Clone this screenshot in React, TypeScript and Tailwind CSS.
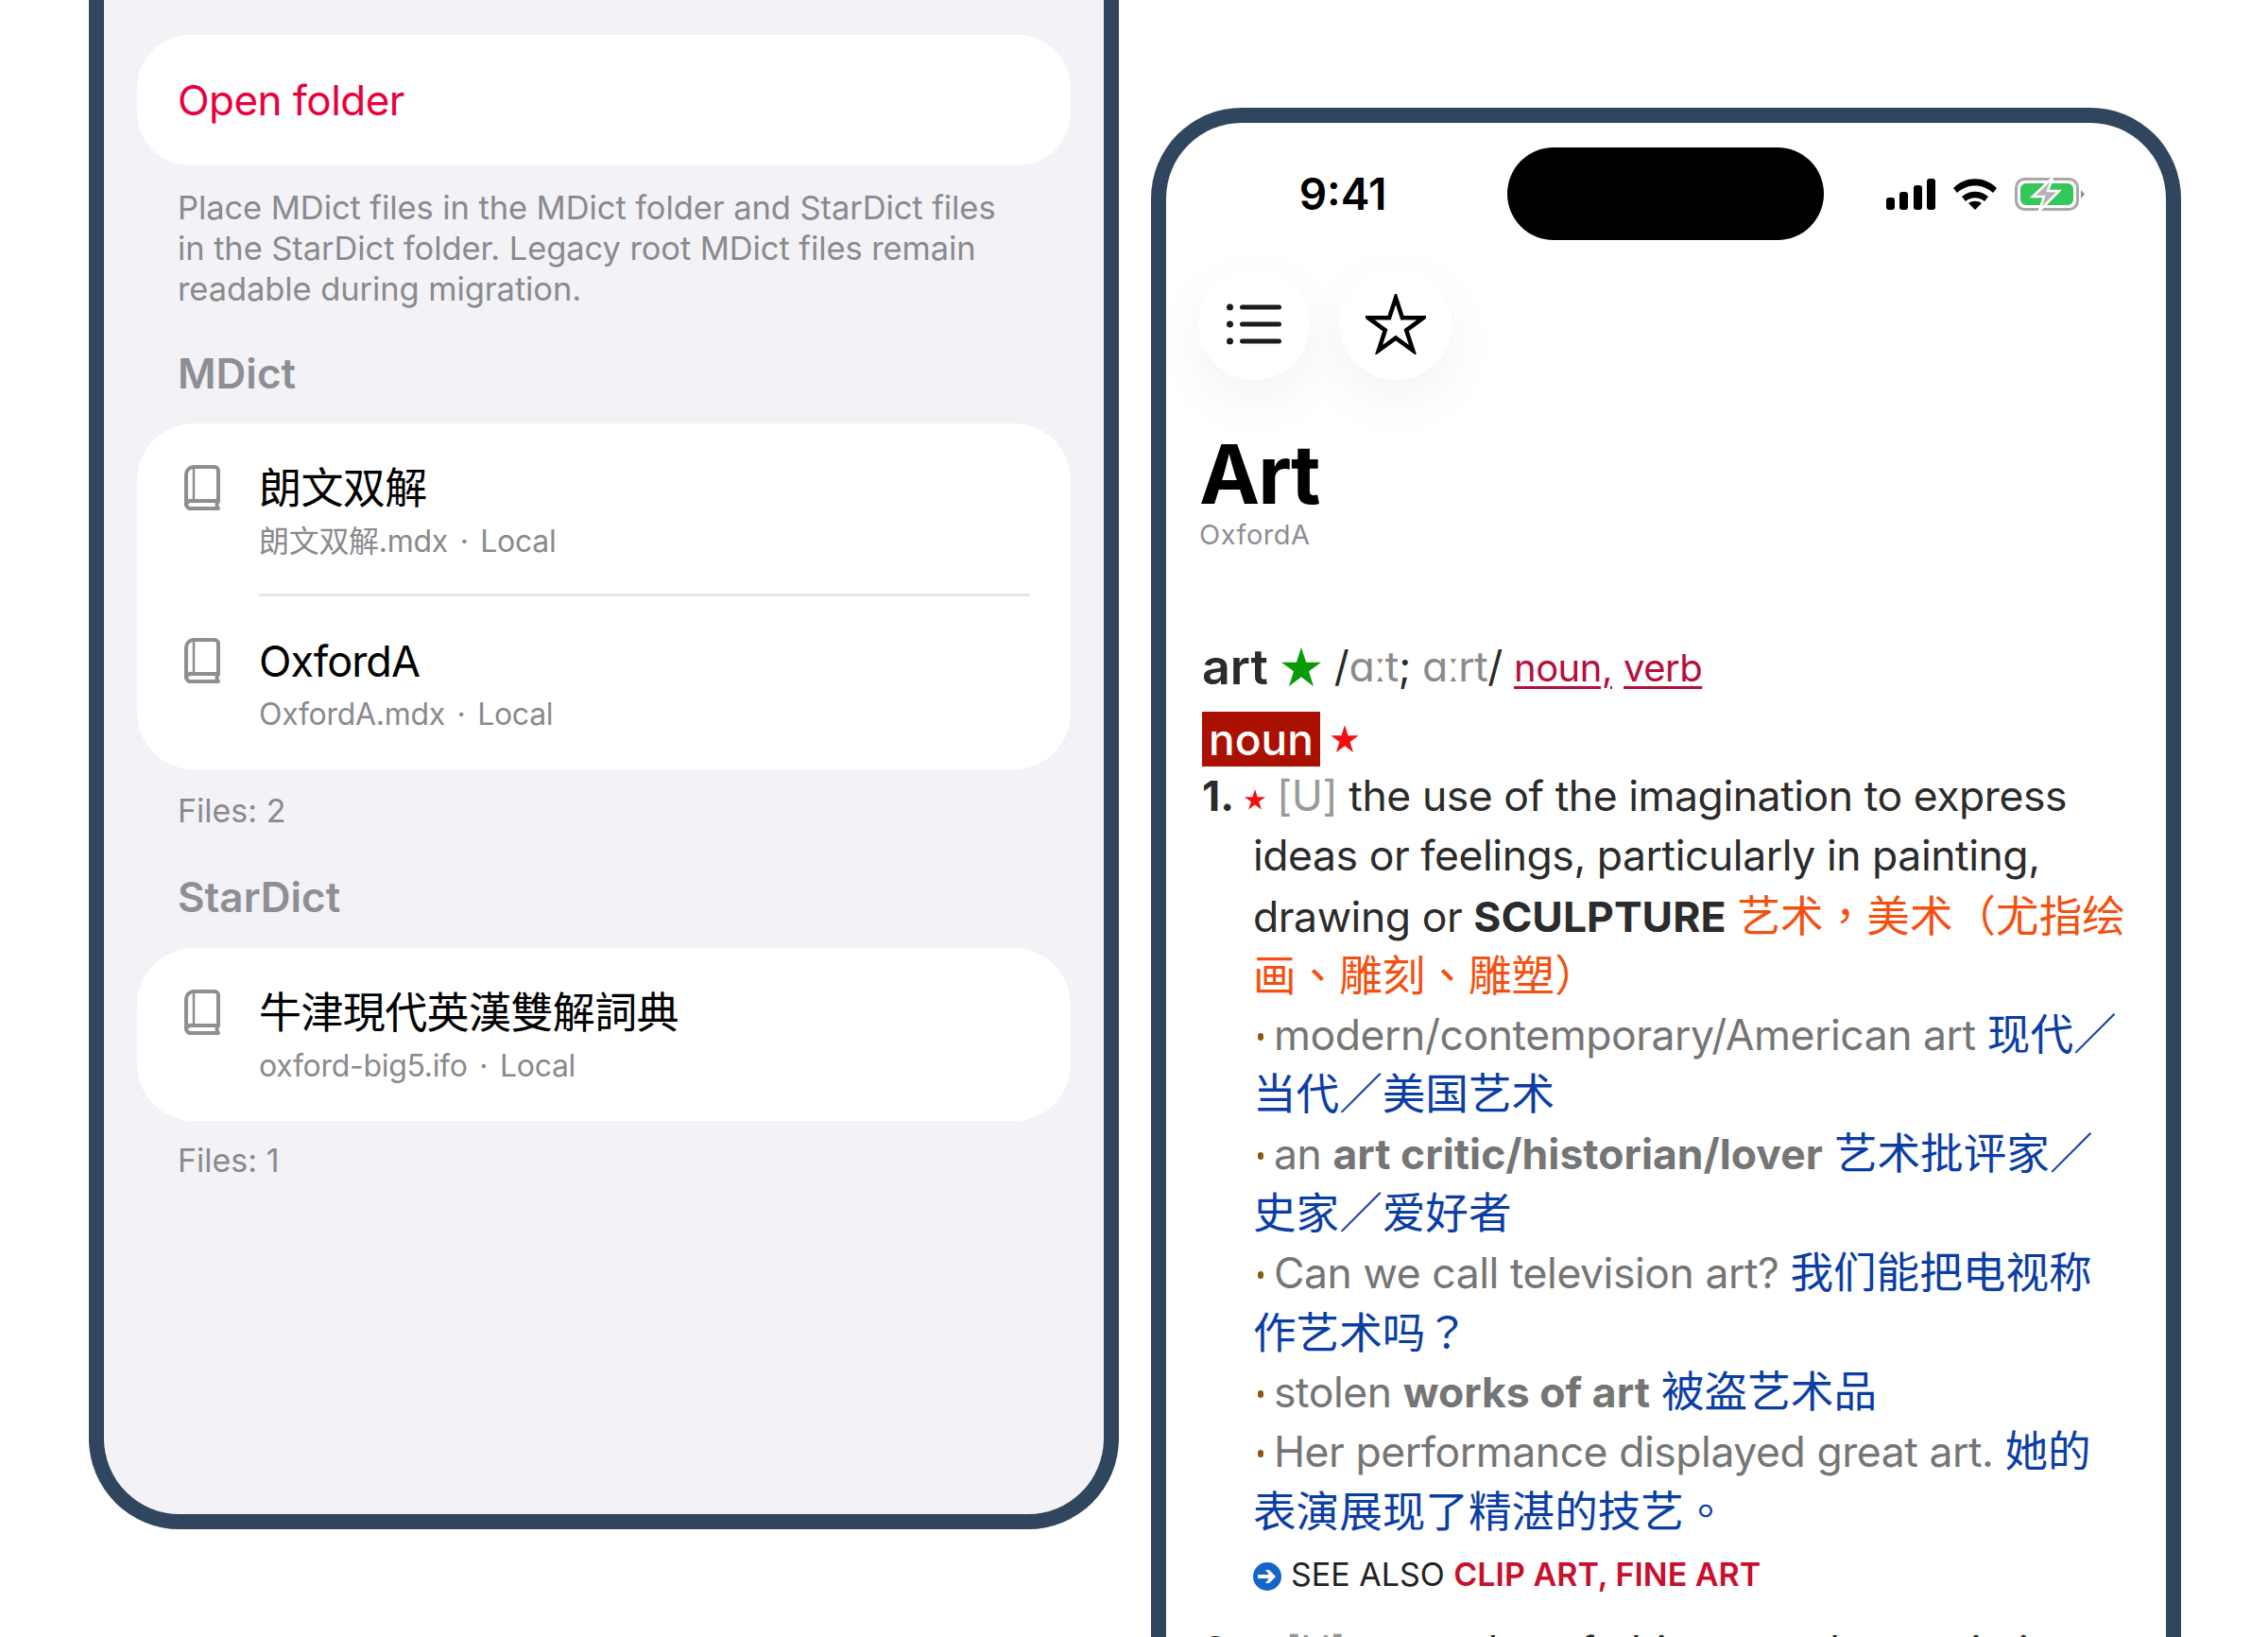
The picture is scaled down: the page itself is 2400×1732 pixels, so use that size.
const cjk = `font-['Inter','Noto_Sans_CJK_SC',sans-serif]`;

const Star = ({ className }: { className: string }) => (
  <svg viewBox="0 0 24 24" className={className} fill="currentColor">
    <path d="M12 1l2.7 8.2H23l-6.8 5 2.6 8.3L12 17.4l-6.8 5.1 2.6-8.3L1 9.2h8.3z" />
  </svg>
);

const BookIcon = () => (
  <svg viewBox="0 0 38 48" className="w-[38px] h-[48px] shrink-0" fill="none" stroke="#8e8e93" strokeWidth="4" strokeLinejoin="round" strokeLinecap="round">
    <path d="M10 2h22a4 4 0 0 1 4 4v32H8a5 5 0 0 0-6 4V10a8 8 0 0 1 8-8z" />
    <path d="M10 2v36" strokeWidth="2.5" />
    <path d="M2 42a5 5 0 0 0 6 4h28c-2-2-2-6 0-8" />
  </svg>
);

const DictRow = ({ title, file, divider, titleClass = "" }: { title: string; file: string; divider?: boolean; titleClass?: string }) => (
  <div className="flex pl-[50px] pr-[43px] h-[183px]">
    <div className="w-[79px] pt-[44px]">
      <BookIcon />
    </div>
    <div className="flex-1 pt-[40px] relative">
      <div className={`text-[45px] leading-[58px] text-black tracking-[-0.6px] ${titleClass}`}>{title}</div>
      <div className="text-[32px] leading-[40px] mt-[7px] text-[#8a8a8e] tracking-[-0.3px]">
        {file} <span className="mx-[4px]">·</span> Local
      </div>
      {divider && <div className="absolute left-0 right-0 bottom-0 h-[3px] bg-[#e5e5ea]" />}
    </div>
  </div>
);

const LeftPhone = () => (
  <div className="w-[1090px] h-[1618px] shrink-0 border-x-[16px] border-b-[16px] border-[#30455e] rounded-b-[96px] bg-[#f2f2f7] px-[35px] pt-[37px]">
    <div className="h-[138px] bg-white rounded-[56px] flex items-center pl-[43px] text-[44px] tracking-[-0.55px] text-[#e8003c]">Open folder</div>
    <div className="mt-[23px] pl-[43px] text-[34.5px] leading-[43px] tracking-[-0.09px] text-[#8a8a8e]">
      <div>Place MDict files in the MDict folder and StarDict files</div>
      <div>in the StarDict folder. Legacy root MDict files remain</div>
      <div>readable during migration.</div>
    </div>
    <div className="mt-[40px] pl-[43px] text-[44px] leading-[56px] font-semibold text-[#8e8e93]">MDict</div>
    <div className="mt-[25px] bg-white rounded-[60px] h-[366px]">
      <DictRow title="朗文双解" file="朗文双解.mdx" divider />
      <DictRow title="OxfordA" file="OxfordA.mdx" titleClass="tracking-[-1px]" />
    </div>
    <div className="mt-[23px] pl-[43px] text-[34px] leading-[42px] text-[#8a8a8e]">Files: 2</div>
    <div className="mt-[42px] pl-[43px] text-[44px] leading-[56px] font-semibold text-[#8e8e93]">StarDict</div>
    <div className="mt-[26px] bg-white rounded-[60px] h-[183px]">
      <DictRow title="牛津現代英漢雙解詞典" file="oxford-big5.ifo" />
    </div>
    <div className="mt-[21px] pl-[43px] text-[34px] leading-[42px] text-[#8a8a8e]">Files: 1</div>
  </div>
);

const StatusIcons = () => (
  <div className="flex items-center ml-[66px] gap-[19px]">
    <svg viewBox="0 0 52 33" className="w-[52px] h-[33px]" fill="#000">
      <rect x="0" y="20" width="9" height="13" rx="3" />
      <rect x="14" y="14" width="9" height="19" rx="3" />
      <rect x="29" y="7" width="9" height="26" rx="3" />
      <rect x="43" y="0" width="9" height="33" rx="3" />
    </svg>
    <svg viewBox="0 0 46 33" className="w-[46px] h-[33px]" fill="#000">
      <path d="M0 10C13-3 33-3 46 10l-4 5C31 5 15 5 4 15z" />
      <path d="M9 19c8-7 20-7 28 0l-4 5c-6-5-14-5-20 0z" />
      <path d="M16 26c4-3 10-3 14 0l-7 7z" />
    </svg>
    <svg viewBox="0 0 74 35" className="w-[74px] h-[35px]">
      <rect x="1.5" y="1.5" width="65" height="32" rx="9" fill="none" stroke="#a8a8a8" strokeWidth="3" />
      <rect x="6" y="6" width="56" height="23" rx="6" fill="#34c759" />
      <path d="M70 13l4 4.500-4 4.500z" fill="#8e8e8e" />
      <path d="M40 0L19 20h12l-5 15 21-21H35z" fill="#b4b4b4" stroke="#fff" strokeWidth="2.500" />
    </svg>
  </div>
);

const Line = ({ children, className = "" }: { children: React.ReactNode; className?: string }) => (
  <div className={`h-[63px] flex items-center ${className}`}>
    <span>{children}</span>
  </div>
);

const Example = ({ children }: { children: React.ReactNode }) => (
  <div className="h-[63px] flex items-center text-[#757575]">
    <span className="w-[6px] h-[8px] ml-[5px] mr-[11px] mt-[4px] shrink-0 rounded-full bg-[#8a5a10]" />
    <span>{children}</span>
  </div>
);

const Blue = ({ children }: { children: React.ReactNode }) => (
  <span className="text-[#0b3ea5] text-[45.6px] tracking-normal">{children}</span>
);
const Orange = ({ children }: { children: React.ReactNode }) => (
  <span className="text-[#f4500f] text-[45.6px] tracking-normal">{children}</span>
);
// centred punctuation, as the traditional Chinese cut of the font draws it
const Punct = ({ children }: { children: React.ReactNode }) => (
  <span className="font-['Noto_Sans_CJK_TC',sans-serif]">{children}</span>
);

const roundButton = "w-[118px] h-[118px] rounded-full bg-white shadow-[0_20px_60px_rgba(0,0,0,0.05)] flex items-center justify-center";

const RightPhone = () => (
  <div className="w-[1090px] h-[1700px] shrink-0 mt-[114px] border-x-[16px] border-t-[16px] border-[#30455e] rounded-t-[96px] bg-white overflow-hidden">
    <div className="flex items-center mt-[26px] h-[98px]">
      <div className="w-[361px] pl-[13px] text-center text-[46px] font-semibold text-black">9:41</div>
      <div className="w-[335px] h-[98px] rounded-[49px] bg-black" />
      <StatusIcons />
    </div>
    <div className="flex gap-[32px] mt-[30px] ml-[34px]">
      <div className={roundButton}>
        <svg viewBox="0 0 58 44" className="w-[58px] h-[44px]" fill="#1c1c1e">
          <circle cx="3.500" cy="4" r="3.500" />
          <circle cx="3.500" cy="22" r="3.500" />
          <circle cx="3.500" cy="40" r="3.500" />
          <rect x="14" y="1.500" width="44" height="5" rx="2.500" />
          <rect x="14" y="19.500" width="44" height="5" rx="2.500" />
          <rect x="14" y="37.500" width="44" height="5" rx="2.500" />
        </svg>
      </div>
      <div className={roundButton}>
        <svg viewBox="0 0 24 24" className="w-[64px] h-[64px]" fill="none" stroke="#000" strokeWidth="1.700" strokeLinejoin="miter">
          <path d="M12 1.500l2.600 8h8.300l-6.700 4.900 2.600 8L12 17.500l-6.800 4.900 2.600-8L1.100 9.500h8.300z" />
        </svg>
      </div>
    </div>
    <div className="ml-[35px] mt-[50px] text-[86px] leading-[100px] font-bold tracking-[-2px] text-black">Art</div>
    <div className="ml-[35px] mt-[-6px] text-[29px] leading-[40px] text-[#8e8e93] tracking-[0.5px]">OxfordA</div>
    <div className="ml-[38px] mt-[88px] text-[44.5px] leading-[63px] tracking-[-0.45px] text-[#2b2b2b] whitespace-nowrap">
      <div className="flex items-center gap-[12px] h-[63px]">
        <span className="font-semibold text-[52px] tracking-normal">art</span>
        <Star className="w-[46px] h-[46px] text-[#0a9a0a]" />
        <span>
          /<span className="text-[#8a8a8a]">ɑːt</span>; <span className="text-[#8a8a8a]">ɑːrt</span>/{" "}
          <span className="text-[#b5103c] text-[40px] tracking-[-0.5px] underline underline-offset-[5px] decoration-[3px]">noun,</span>{" "}
          <span className="text-[#b5103c] text-[40px] tracking-[-0.5px] underline underline-offset-[5px] decoration-[3px]">verb</span>
        </span>
      </div>
      <div className="flex items-center gap-[10px] mt-[16px]">
        <span className="bg-[#ab1100] text-white h-[58px] w-[125px] flex items-center justify-center font-medium text-[46px] tracking-normal">noun</span>
        <Star className="w-[32px] h-[32px] text-[#f01010]" />
      </div>
      <Line>
        <span className="font-bold tracking-normal">1.</span>
        <span className="inline-block w-[10px]" />
        <Star className="inline-block w-[24px] h-[24px] text-[#f01010]" />
        <span className="inline-block w-[11px]" />
        <span className="text-[#999]">[U]</span> the use of the imagination to express
      </Line>
      <div className="ml-[54px]">
        <Line>ideas or feelings, particularly in painting,</Line>
        <Line>
          drawing or <b className="tracking-normal">SCULPTURE</b> <Orange>艺术<Punct>，</Punct>美术（尤指绘</Orange>
        </Line>
        <Line><Orange>画<Punct>、</Punct>雕刻<Punct>、</Punct>雕塑）</Orange></Line>
        <Example>modern/contemporary/American art <Blue>现代／</Blue></Example>
        <Line><Blue>当代／美国艺术</Blue></Line>
        <Example>an <b className="tracking-normal">art critic/historian/lover</b> <Blue>艺术批评家／</Blue></Example>
        <Line><Blue>史家／爱好者</Blue></Line>
        <Example>Can we call television art? <Blue>我们能把电视称</Blue></Example>
        <Line><Blue>作艺术吗<Punct>？</Punct></Blue></Line>
        <Example>stolen <b className="tracking-normal">works of art</b> <Blue>被盗艺术品</Blue></Example>
        <Example>Her performance displayed great art. <Blue>她的</Blue></Example>
        <Line><Blue>表演展现了精湛的技艺<Punct>。</Punct></Blue></Line>
        <div className="h-[63px] mt-[4px] flex items-center gap-[10px] text-[34px] tracking-normal text-[#222]">
          <svg viewBox="0 0 30 30" className="w-[30px] h-[30px] mt-[5px]">
            <circle cx="15" cy="15" r="15" fill="#1565c8" />
            <path d="M5 13h12l-4-5h4l7 7-7 7h-4l4-5H5z" fill="#fff" />
          </svg>
          <span>SEE ALSO <span className="text-[#c8102e] font-semibold">CLIP ART, FINE ART</span></span>
        </div>
      </div>
      <Line className="mt-[19px]">
        <span className="font-bold tracking-normal">2.</span>
        <span className="inline-block w-[45px]" />
        <span className="text-[#999]">[U]</span> examples of objects such as paintings,
      </Line>
    </div>
  </div>
);

export default function App() {
  return (
    <div className={`w-[2400px] h-[1732px] overflow-hidden bg-white flex items-start gap-[34px] pl-[94px] ${cjk}`}>
      <LeftPhone />
      <RightPhone />
    </div>
  );
}
